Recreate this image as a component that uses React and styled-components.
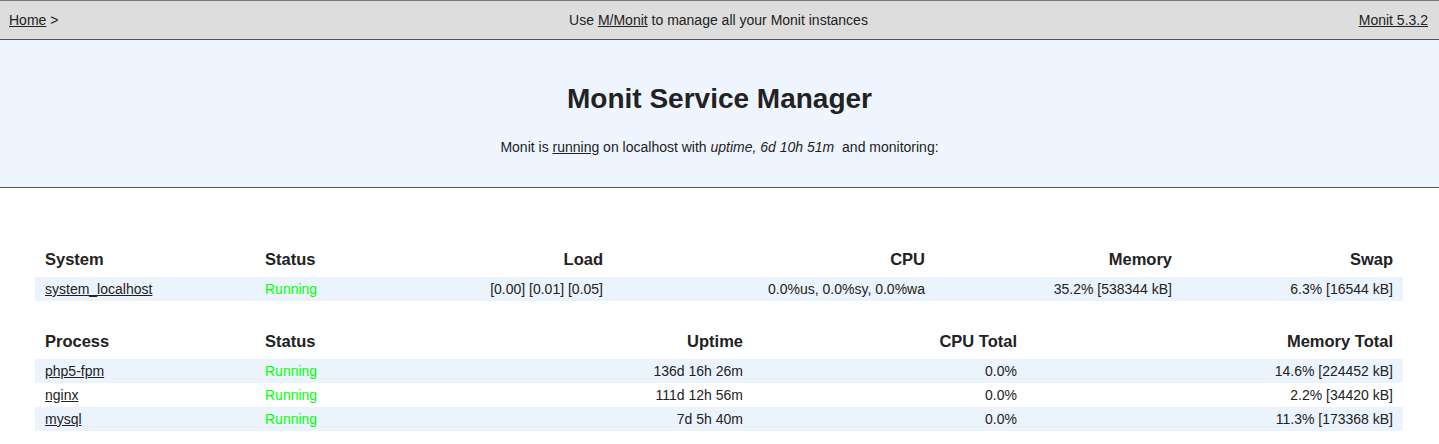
import styled, { createGlobalStyle } from "styled-components"

const GlobalStyle = createGlobalStyle`
  html, body {
    margin: 0;
    padding: 0;
    background: #fff;
    font-family: "Liberation Sans", Arial, Helvetica, sans-serif;
    font-size: 14px;
    color: #222;
  }
`

const NavBar = styled.div`
  display: flex;
  align-items: center;
  height: 38px;
  padding: 0 11px 0 9px;
  background: #ddd;
  border-top: 1px solid #777;
  border-bottom: 1px solid #555;
  font-size: 14px;
`

const NavSide = styled.div`
  flex: 1;
  text-align: ${props => props.align || "left"};
`

const NavCenter = styled.div`
  flex: 2;
  text-align: center;
`

const Link = styled.a`
  color: #222;
  text-decoration: underline;
  cursor: pointer;
`

const Header = styled.div`
  height: 148px;
  box-sizing: border-box;
  padding-top: 43px;
  background: #eff5ff;
  border-bottom: 1px solid #555;
  text-align: center;
`

const Title = styled.h1`
  margin: 0;
  font-size: 28px;
  line-height: 32px;
  font-weight: bold;
`

const Subtitle = styled.p`
  margin: 23px 0 0;
  font-size: 14px;
  line-height: 18px;
`

const Content = styled.div`
  padding-top: 55px;
`

const Table = styled.table`
  width: calc(100% - 71px);
  margin: 0 36px 24px 35px;
  border-collapse: collapse;
  table-layout: fixed;
`

const Th = styled.th`
  padding: 7px 10px 9px;
  height: 18px;
  font-size: 16.5px;
  line-height: 18px;
  font-weight: bold;
  text-align: ${props => props.align || "left"};
  vertical-align: bottom;
`

const Row = styled.tr`
  background: ${props => (props.stripe ? "#ebf3fd" : "#fff")};
`

const Td = styled.td`
  height: 24px;
  padding: 0 10px;
  font-size: 14px;
  line-height: 24px;
  text-align: ${props => props.align || "left"};
  white-space: nowrap;
`

const Status = styled(Td)`
  color: #00ff00;
`

const systemCols = [
  { label: "System", width: 220 },
  { label: "Status", width: 190 },
  { label: "Load", width: 168, align: "right" },
  { label: "CPU", width: 322, align: "right" },
  { label: "Memory", width: 247, align: "right" },
  { label: "Swap", align: "right" },
]

const processCols = [
  { label: "Process", width: 220 },
  { label: "Status", width: 190 },
  { label: "Uptime", width: 308, align: "right" },
  { label: "CPU Total", width: 274, align: "right" },
  { label: "Memory Total", align: "right" },
]

const processes = [
  { name: "php5-fpm", uptime: "136d 16h 26m", cpu: "0.0%", mem: "14.6% [224452 kB]" },
  { name: "nginx", uptime: "111d 12h 56m", cpu: "0.0%", mem: "2.2% [34420 kB]" },
  { name: "mysql", uptime: "7d 5h 40m", cpu: "0.0%", mem: "11.3% [173368 kB]" },
]

const HeadRow = ({ cols }) => (
  <>
    <colgroup>
      {cols.map(c => <col key={c.label} style={c.width ? { width: c.width } : undefined} />)}
    </colgroup>
    <thead>
      <tr>
        {cols.map(c => <Th key={c.label} align={c.align}>{c.label}</Th>)}
      </tr>
    </thead>
  </>
)

export default function App() {
  return (
    <>
      <GlobalStyle />
      <NavBar>
        <NavSide><Link>Home</Link> &gt;</NavSide>
        <NavCenter>Use <Link>M/Monit</Link> to manage all your Monit instances</NavCenter>
        <NavSide align="right"><Link>Monit 5.3.2</Link></NavSide>
      </NavBar>
      <Header>
        <Title>Monit Service Manager</Title>
        <Subtitle>
          Monit is <Link>running</Link> on localhost with <i>uptime, 6d 10h 51m</i>&nbsp; and monitoring:
        </Subtitle>
      </Header>
      <Content>
        <Table>
          <HeadRow cols={systemCols} />
          <tbody>
            <Row stripe>
              <Td><Link>system_localhost</Link></Td>
              <Status>Running</Status>
              <Td align="right">[0.00]&nbsp;[0.01]&nbsp;[0.05]</Td>
              <Td align="right">0.0%us,&nbsp;0.0%sy,&nbsp;0.0%wa</Td>
              <Td align="right">35.2% [538344&nbsp;kB]</Td>
              <Td align="right">6.3% [16544&nbsp;kB]</Td>
            </Row>
          </tbody>
        </Table>
        <Table>
          <HeadRow cols={processCols} />
          <tbody>
            {processes.map((p, i) => (
              <Row key={p.name} stripe={i % 2 === 0}>
                <Td><Link>{p.name}</Link></Td>
                <Status>Running</Status>
                <Td align="right">{p.uptime}</Td>
                <Td align="right">{p.cpu}</Td>
                <Td align="right">{p.mem}</Td>
              </Row>
            ))}
          </tbody>
        </Table>
      </Content>
    </>
  )
}
